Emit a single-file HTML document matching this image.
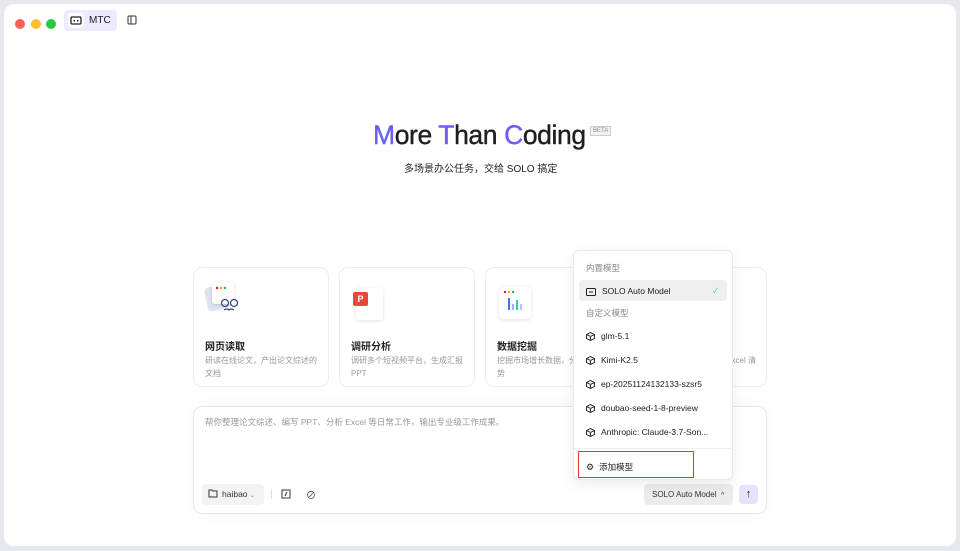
<!DOCTYPE html>
<html><head><meta charset="utf-8"><style>
*{box-sizing:border-box;margin:0;padding:0}
body{width:960px;height:551px;background:#e6e8ee;font-family:"Liberation Sans","Noto Sans CJK SC",sans-serif;position:relative;overflow:hidden}
.win{position:absolute;left:4px;top:4px;width:952px;height:542px;background:#fff;border-radius:10px}
.abs{position:absolute}
.dot{position:absolute;top:15px;width:10px;height:10px;border-radius:50%}
.card{position:absolute;top:267px;width:136px;height:120px;border:1px solid #ececf2;border-radius:9px;background:#fff}
.card .t{position:absolute;left:11px;top:70px;font-size:10px;font-weight:bold;color:#222}
.card .d{position:absolute;left:11px;top:86px;width:118px;font-size:8px;line-height:13px;color:#999}
.menu{position:absolute;left:573px;top:250px;width:160px;height:230px;background:#fff;border:1px solid #e8e8ee;border-radius:6px;box-shadow:0 4px 14px rgba(0,0,0,.08)}
.mi{position:absolute;left:12px;font-size:8.5px;color:#222}
.cube{display:inline-block;vertical-align:-2px;margin-right:6px}
</style></head><body>
<div class="win">
<div class="dot" style="left:11px;background:#fe5f57"></div>
<div class="dot" style="left:27px;background:#febc2e"></div>
<div class="dot" style="left:42px;background:#28c840"></div>
<div class="abs" style="left:60px;top:6px;width:53px;height:21px;background:#eeeafe;border-radius:4px"></div>
<div class="abs" style="left:64px;top:9px;width:16px;height:15px;background:#fff;border-radius:3px"></div>
<svg class="abs" style="left:66px;top:12px" width="12" height="9"><rect x="1" y="1" width="10" height="7" rx="1" fill="none" stroke="#222" stroke-width="1.3"/><rect x="3.5" y="4" width="1.5" height="1.5" fill="#222"/><rect x="7" y="4" width="1.5" height="1.5" fill="#222"/></svg>
<div class="abs" style="left:85px;top:11px;font-size:10px;color:#222">MTC</div>
<svg class="abs" style="left:123px;top:11px" width="10" height="10"><rect x="1" y="1" width="8" height="8" rx="1" fill="none" stroke="#333" stroke-width="1"/><line x1="4" y1="1" x2="4" y2="9" stroke="#333"/></svg>
</div>
<div class="abs" style="left:373px;top:120px;font-size:26.5px;color:#1f1f1f;letter-spacing:-0.4px;-webkit-text-stroke:0.4px #1f1f1f"><span style="color:#6b5cf6;-webkit-text-stroke-color:#6b5cf6">M</span>ore <span style="color:#6b5cf6;-webkit-text-stroke-color:#6b5cf6">T</span>han <span style="color:#6b5cf6;-webkit-text-stroke-color:#6b5cf6">C</span>oding</div>
<div class="abs" style="left:590px;top:126px;font-size:6px;color:#888;border:1px solid #ccc;background:#f2f2f5;padding:1px 2px">BETA</div>
<div class="abs" style="left:404px;top:160px;font-size:10px;color:#222">多场景办公任务，交给 SOLO 搞定</div>

<div class="card" style="left:193px">
<div class="abs" style="left:12px;top:18px;width:22px;height:24px;background:#dfe3f0;border-radius:4px;transform:rotate(-12deg)"></div>
<div class="abs" style="left:18px;top:14px;width:22px;height:22px;background:#fff;border-radius:3px;box-shadow:0 1px 3px rgba(0,0,0,.15)"></div>
<svg class="abs" style="left:20px;top:18px" width="30" height="30"><circle cx="3" cy="2" r="1.2" fill="#f04"/><circle cx="7" cy="2" r="1.2" fill="#fa0"/><circle cx="11" cy="2" r="1.2" fill="#2b4"/><circle cx="11" cy="17" r="3.5" fill="none" stroke="#3a4a7a" stroke-width="1.3"/><circle cx="20" cy="17" r="3.5" fill="none" stroke="#3a4a7a" stroke-width="1.3"/><path d="M10 24q3-2 5 0q2-2 5 0" fill="none" stroke="#3a4a7a" stroke-width="1.3"/></svg>
<div class="t">网页读取</div><div class="d">研读在线论文，产出论文综述的文档</div></div>
<div class="card" style="left:339px">
<div class="abs" style="left:16px;top:20px;width:27px;height:32px;background:#fff;border-radius:3px;box-shadow:0 1px 4px rgba(0,0,0,.12)"></div>
<div class="abs" style="left:13px;top:24px;width:15px;height:14px;background:#e8483a;border-radius:2px;color:#fff;font-size:9px;font-weight:bold;text-align:center;line-height:14px">P</div>
<div class="t">调研分析</div><div class="d">调研多个短视频平台，生成汇报PPT</div></div>
<div class="card" style="left:485px">
<div class="abs" style="left:13px;top:19px;width:32px;height:32px;background:#fff;border-radius:5px;box-shadow:0 1px 4px rgba(0,0,0,.12)"></div>
<svg class="abs" style="left:16px;top:22px" width="26" height="26"><circle cx="3" cy="2" r="1.2" fill="#f04"/><circle cx="7" cy="2" r="1.2" fill="#fa0"/><circle cx="11" cy="2" r="1.2" fill="#2b4"/><rect x="6" y="8" width="2" height="12" fill="#4a6cf7"/><rect x="10" y="14" width="2" height="6" fill="#9db0f5"/><rect x="14" y="10" width="2" height="10" fill="#3cc7a8"/><rect x="18" y="14" width="2" height="6" fill="#b8c4f7"/></svg>
<div class="t">数据挖掘</div><div class="d">挖掘市场增长数据，分析发展趋势</div></div>
<div class="card" style="left:631px"><div class="d" style="left:auto;right:10px;width:auto">xcel 清</div></div>

<div class="abs" style="left:193px;top:406px;width:574px;height:108px;border:1px solid #e6e6ee;border-radius:9px;background:#fff;box-shadow:0 0 18px rgba(0,0,0,.04)"></div>
<div class="abs" style="left:205px;top:416px;font-size:8.5px;color:#999">帮你整理论文综述、编写 PPT、分析 Excel 等日常工作，输出专业级工作成果。</div>
<div class="abs" style="left:202px;top:484px;width:62px;height:21px;background:#f3f3f5;border-radius:4px;font-size:8.5px;color:#333;padding:5px 0 0 20px">haibao <span style="font-size:6px;color:#888">⌄</span></div>
<svg class="abs" style="left:208px;top:489px" width="10" height="9"><path d="M1 1h3l1 1h4v6H1z" fill="none" stroke="#333"/></svg>
<div class="abs" style="left:271px;top:489px;width:1px;height:10px;background:#ddd"></div>
<svg class="abs" style="left:281px;top:489px" width="10" height="10"><rect x="1" y="1" width="8" height="8" fill="none" stroke="#333"/><line x1="6" y1="3" x2="4" y2="7" stroke="#333"/></svg>
<div class="abs" style="left:306px;top:487px;font-size:10px;color:#333">⊘</div>
<div class="abs" style="left:644px;top:484px;width:89px;height:21px;background:#ececef;border-radius:4px;font-size:8px;color:#333;padding:6px 0 0 8px">SOLO Auto Model &nbsp;<span style="font-size:7px">^</span></div>
<div class="abs" style="left:739px;top:485px;width:19px;height:19px;background:#e6e3fd;border-radius:4px;text-align:center;font-size:11px;line-height:19px;color:#222">↑</div>

<div class="menu">
<div class="mi" style="top:11px;color:#888">内置模型</div>
<div class="abs" style="left:5px;top:29px;width:148px;height:21px;background:#efeff2;border-radius:4px"></div>
<div class="mi" style="top:35px"><svg class="cube" width="10" height="8"><rect x="0.5" y="0.5" width="9" height="7" rx="1" fill="none" stroke="#222"/><rect x="3" y="3.5" width="4" height="1" fill="#222"/></svg>SOLO Auto Model</div>
<div class="mi" style="top:35px;left:139px;color:#3b9;font-size:7px">✓</div>
<div class="mi" style="top:56px;color:#888">自定义模型</div>
<div class="mi" style="top:80px"><svg class="cube" width="9" height="9"><path d="M4.5 .5l4 2v4l-4 2-4-2v-4zM.5 2.5l4 2 4-2M4.5 4.5v4" fill="none" stroke="#333"/></svg>glm-5.1</div>
<div class="mi" style="top:104px"><svg class="cube" width="9" height="9"><path d="M4.5 .5l4 2v4l-4 2-4-2v-4zM.5 2.5l4 2 4-2M4.5 4.5v4" fill="none" stroke="#333"/></svg>Kimi-K2.5</div>
<div class="mi" style="top:128px"><svg class="cube" width="9" height="9"><path d="M4.5 .5l4 2v4l-4 2-4-2v-4zM.5 2.5l4 2 4-2M4.5 4.5v4" fill="none" stroke="#333"/></svg>ep-20251124132133-szsr5</div>
<div class="mi" style="top:152px"><svg class="cube" width="9" height="9"><path d="M4.5 .5l4 2v4l-4 2-4-2v-4zM.5 2.5l4 2 4-2M4.5 4.5v4" fill="none" stroke="#333"/></svg>doubao-seed-1-8-preview</div>
<div class="mi" style="top:176px"><svg class="cube" width="9" height="9"><path d="M4.5 .5l4 2v4l-4 2-4-2v-4zM.5 2.5l4 2 4-2M4.5 4.5v4" fill="none" stroke="#333"/></svg>Anthropic: Claude-3.7-Son...</div>
<div class="abs" style="left:0;top:197px;width:158px;height:1px;background:#eee"></div>
<div class="abs" style="left:4px;top:200px;width:116px;height:27px;border:1.5px solid #e53935"></div>
<div class="mi" style="top:210px"><span style="font-size:9px;margin-right:5px">⚙</span>添加模型</div>
</div>
</body></html>
